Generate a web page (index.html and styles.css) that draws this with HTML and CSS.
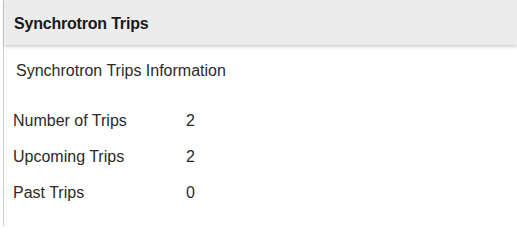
FILE: index.html
```html
<!DOCTYPE html>
<html>
<head>
<meta charset="utf-8">
<link rel="stylesheet" href="styles.css">
</head>
<body>
<div class="card">
  <div class="card-header"><span class="title">Synchrotron Trips</span></div>
  <div class="card-body">
    <div class="subtitle">Synchrotron Trips Information</div>
    <div class="stats">
      <div class="row"><span class="label">Number of Trips</span><span class="value">2</span></div>
      <div class="row"><span class="label">Upcoming Trips</span><span class="value">2</span></div>
      <div class="row"><span class="label">Past Trips</span><span class="value">0</span></div>
    </div>
  </div>
</div>
</body>
</html>
```
FILE: styles.css
```css
html, body {
  margin: 0;
  padding: 0;
  background: #fff;
}
body {
  font-family: "Liberation Sans", Arial, sans-serif;
  color: #222;
  width: 517px;
  height: 226px;
  overflow: hidden;
}
.card {
  margin-left: 3px;
  border-left: 1px solid #cfcfcf;
  height: 226px;
}
.card-header {
  background: #ececec;
  height: 45px;
  display: flex;
  align-items: center;
  padding-left: 10px;
  padding-top: 2px;
  box-sizing: border-box;
  box-shadow: 0 2px 3px rgba(0,0,0,0.18);
  position: relative;
}
.title {
  font-weight: bold;
  font-size: 16px;
  line-height: 18px;
  color: #1a1a1a;
  letter-spacing: -0.2px;
}
.card-body {
  padding: 17px 0 0 12px;
}
.subtitle {
  font-size: 16px;
  line-height: 18px;
  color: #2a2a2a;
}
.stats {
  margin-top: 32px;
  display: flex;
  flex-direction: column;
  gap: 18px;
  margin-left: -3px;
}
.row {
  display: flex;
  font-size: 16px;
  color: #2a2a2a;
  line-height: 18px;
}
.label {
  width: 173px;
}
```
